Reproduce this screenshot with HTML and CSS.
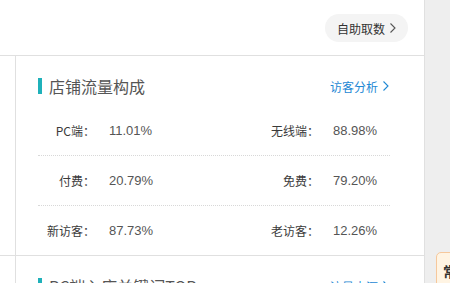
FILE: index.html
```html
<!DOCTYPE html>
<html lang="zh-CN">
<head>
    <meta charset="UTF-8">
    <meta name="viewport" content="width=device-width, initial-scale=1.0">
    <title>店铺流量构成</title>
    <link rel="stylesheet" href="styles.css">
</head>
<body>
    <div class="main">
        <div class="topbar">
            <a class="pill-btn" href="#">自助取数
                <svg class="chev" width="6" height="10" viewBox="0 0 6 10"><polyline points="0.5,0.5 5,5 0.5,9.5" fill="none" stroke="#555" stroke-width="1.1"/></svg>
            </a>
        </div>

        <div class="section">
            <div class="gutter"></div>
            <div class="panel">
                <div class="panel-head">
                    <h3 class="panel-title">店铺流量构成</h3>
                    <a class="more-link" href="#">访客分析
                        <svg class="chev" width="6" height="10" viewBox="0 0 6 10"><polyline points="0.5,0.5 5,5 0.5,9.5" fill="none" stroke="#1e88d4" stroke-width="1.1"/></svg>
                    </a>
                </div>
                <div class="stat-row">
                    <span class="label">PC端：</span><span class="value">11.01%</span>
                    <span class="label">无线端：</span><span class="value">88.98%</span>
                </div>
                <div class="stat-row">
                    <span class="label">付费：</span><span class="value">20.79%</span>
                    <span class="label">免费：</span><span class="value">79.20%</span>
                </div>
                <div class="stat-row">
                    <span class="label">新访客：</span><span class="value">87.73%</span>
                    <span class="label">老访客：</span><span class="value">12.26%</span>
                </div>
            </div>
        </div>

        <div class="section">
            <div class="gutter"></div>
            <div class="panel">
                <div class="panel-head">
                    <h3 class="panel-title">PC端入店关键词TOP</h3>
                    <a class="more-link" href="#">流量来源
                        <svg class="chev" width="6" height="10" viewBox="0 0 6 10"><polyline points="0.5,0.5 5,5 0.5,9.5" fill="none" stroke="#1e88d4" stroke-width="1.1"/></svg>
                    </a>
                </div>
            </div>
        </div>
    </div>

    <div class="aside">
        <div class="tip">常见问题</div>
    </div>
</body>
</html>
```

FILE: styles.css
```css
* {
    margin: 0;
    padding: 0;
    box-sizing: border-box;
}

body {
    font-family: "Noto Sans CJK SC", "Liberation Sans", sans-serif;
    background-color: #eeeeee;
    display: flex;
    height: 100vh;
    overflow: hidden;
}

a {
    text-decoration: none;
}

.main {
    width: 425px;
    flex-shrink: 0;
    background: white;
    border-right: 1px solid #e0e0e0;
}

.topbar {
    height: 56px;
    border-bottom: 1px solid #e0e0e0;
    display: flex;
    justify-content: flex-end;
    padding: 14px 16px 0 0;
}

.pill-btn {
    height: 28px;
    padding: 0 12px;
    border-radius: 14px;
    background: #f4f4f4;
    color: #333;
    font-size: 12px;
    display: flex;
    align-items: center;
    gap: 5px;
}

.section {
    display: flex;
    border-bottom: 1px solid #e0e0e0;
}

.gutter {
    width: 16px;
    border-right: 1px solid #e0e0e0;
}

.panel {
    flex: 1;
    padding: 0 34px 0 22px;
}

.panel-head {
    display: flex;
    justify-content: space-between;
    align-items: center;
    margin: 22px 0 12px;
    height: 16px;
}

.panel-title {
    font-size: 16px;
    font-weight: normal;
    color: #555;
    line-height: 16px;
    display: flex;
    align-items: center;
}

.panel-title::before {
    content: "";
    width: 4px;
    height: 16px;
    background: #1fb1ba;
    margin-right: 7px;
}

.more-link {
    font-size: 12px;
    color: #1e88d4;
    display: flex;
    align-items: center;
    gap: 5px;
    margin-right: 1px;
}

.stat-row {
    display: grid;
    grid-template-columns: 57px 155px 69px 1fr;
    align-items: center;
    height: 50px;
    border-bottom: 1px dotted #d8d8d8;
}

.stat-row:last-child {
    border-bottom: none;
    height: 49px;
}

.label {
    font-size: 12px;
    color: #3a3a3a;
    text-align: right;
}

.value {
    font-family: "Liberation Sans", sans-serif;
    font-size: 13px;
    color: #555;
    padding-left: 14px;
}

.aside {
    flex: 1;
    padding: 252px 0 0 11px;
}

.tip {
    width: 40px;
    background: #fff4e3;
    border: 1px solid #f6c89c;
    border-radius: 5px;
    padding: 8px 6px;
    font-size: 14px;
    font-weight: bold;
    color: #333;
}
```
